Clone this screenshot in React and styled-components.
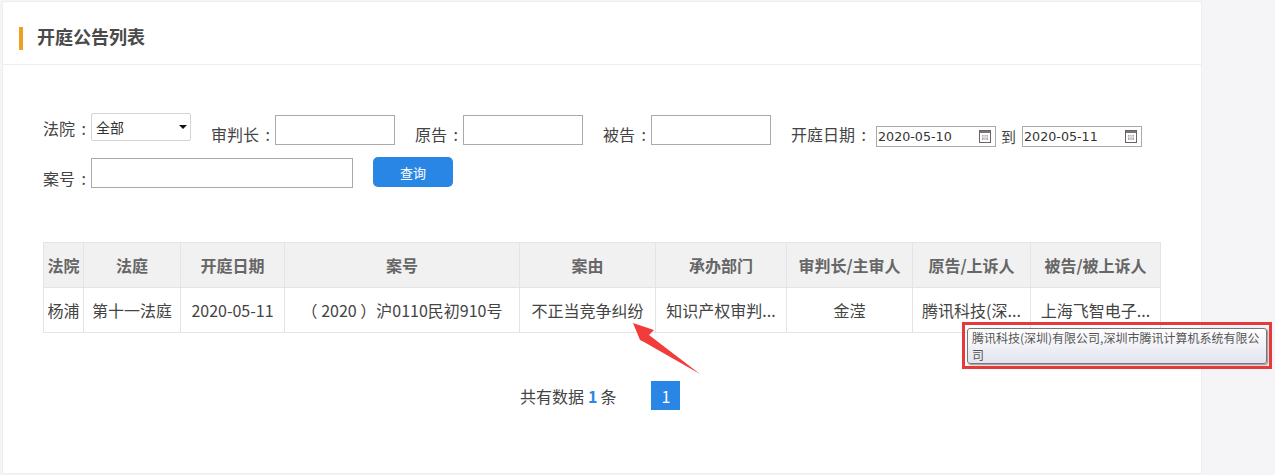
import styled, { createGlobalStyle } from "styled-components"

const FONT = `"Noto Sans CJK SC", "Liberation Sans", sans-serif`

const columns = [
  { name: '法院', width: 40, value: '杨浦' },
  { name: '法庭', width: 97, value: '第十一法庭' },
  { name: '开庭日期', width: 104, value: '2020-05-11' },
  { name: '案号', width: 235, value: '（ 2020 ）沪0110民初910号' },
  { name: '案由', width: 136, value: '不正当竞争纠纷' },
  { name: '承办部门', width: 131, value: '知识产权审判...' },
  { name: '审判长/主审人', width: 126, value: '金滢' },
  { name: '原告/上诉人', width: 118, value: '腾讯科技(深...' },
  { name: '被告/被上诉人', width: 130, value: '上海飞智电子...' },
]

const GlobalStyle = createGlobalStyle`
  body {
    margin: 0;
    background: #f5f5f8;
    font-family: ${FONT};
    color: #444;
  }
`

const Page = styled.div`
  position: relative;
  width: 1275px;
  height: 475px;
  padding: 1px 0 0 2px;
  box-sizing: border-box;
  overflow: hidden;
`

const Card = styled.div`
  width: 1200px;
  height: 473px;
  box-sizing: border-box;
  background: #fff;
  border: 1px solid #eeeeee;
`

const Header = styled.div`
  height: 63px;
  box-sizing: border-box;
  border-bottom: 1px solid #eeeeee;
  padding: 25px 0 0 16px;
  display: flex;
  gap: 14px;
`

const Mark = styled.div`
  width: 4px;
  height: 23px;
  background: #f0a020;
`

const Title = styled.h1`
  margin: -2px 0 0;
  font-size: 18px;
  line-height: 23px;
  font-weight: 700;
  color: #4a4a4a;
`

const Form = styled.div`
  padding: 48px 0 0 40px;
  display: flex;
  flex-direction: column;
  gap: 11px;
`

const Row = styled.div`
  display: flex;
  align-items: flex-start;
  gap: 20px;
`

const Field = styled.div`
  display: flex;
  align-items: flex-start;
  margin-top: ${(p) => p.$top || 0}px;
`

const Label = styled.label`
  width: ${(p) => p.$width}px;
  flex: none;
  margin-top: ${(p) => p.$top || 0}px;
  font-size: 16px;
  line-height: 24px;
  word-spacing: 3px;
  white-space: nowrap;
  color: #444;
`

const TextInput = styled.div`
  width: ${(p) => p.$width}px;
  height: 30px;
  box-sizing: border-box;
  border: 1px solid #aaaaaa;
  background: #fff;
`

const SelectBox = styled.div`
  width: 100px;
  height: 28px;
  box-sizing: border-box;
  border: 1px solid #d4d4d4;
  border-radius: 2px;
  padding-left: 4px;
  display: flex;
  align-items: center;
  justify-content: space-between;
  font-size: 14px;
  color: #333;
`

const Caret = styled.span`
  width: 0;
  height: 0;
  margin-right: 3px;
  border-left: 4px solid transparent;
  border-right: 4px solid transparent;
  border-top: 4px solid #111;
`

const DateBox = styled.div`
  width: 120px;
  height: 21px;
  box-sizing: border-box;
  border: 1px solid #aaaaaa;
  padding: 0 4px 0 1px;
  display: flex;
  align-items: center;
  justify-content: space-between;
  font-family: "DejaVu Sans", sans-serif;
  font-size: 12.7px;
  color: #333;
`

const To = styled.span`
  margin: 0 6px 0 5px;
  font-size: 15px;
  line-height: 21px;
  color: #444;
`

const QueryButton = styled.button`
  width: 80px;
  height: 30px;
  margin-top: -1px;
  border: 0;
  border-radius: 5px;
  background: #2a86e4;
  color: #fff;
  font-family: ${FONT};
  font-size: 13px;
`

const Table = styled.table`
  margin: 52px 0 0 40px;
  width: 1117px;
  table-layout: fixed;
  border-collapse: collapse;
  font-size: 16px;
`

const Th = styled.th`
  width: ${(p) => p.$width}px;
  height: 45px;
  box-sizing: border-box;
  padding: 0;
  background: #f1f1f1;
  border: 1px solid #e4e4e4;
  color: #666;
  font-weight: 700;
`

const Td = styled.td`
  height: 45px;
  box-sizing: border-box;
  padding: 0;
  border: 1px solid #e4e4e4;
  text-align: center;
  white-space: nowrap;
  color: #444;
`

const Pager = styled.div`
  margin: 48px 0 0 517px;
  display: flex;
  align-items: center;
  font-size: 16px;
`

const Count = styled.b`
  margin: 0 3px 0 4px;
  color: #2a86e4;
`

const PageNumber = styled.span`
  width: 29px;
  height: 29px;
  margin-left: 35px;
  display: flex;
  align-items: center;
  justify-content: center;
  background: #2a86e4;
  color: #fff;
`

const Callout = styled.div`
  position: absolute;
  left: 962px;
  top: 322px;
  width: 310px;
  height: 47px;
  box-sizing: border-box;
  border: 3px solid #e8383a;
  padding: 3px 2px;
`

const Tooltip = styled.div`
  height: 36px;
  box-sizing: border-box;
  padding: 0 4px;
  border: 1px solid #777;
  border-radius: 3px;
  background: linear-gradient(#ffffff, #e3e4ee);
  box-shadow: 1px 1px 2px #888;
  font-size: 12px;
  line-height: 17px;
  color: #555;
`

const ArrowSvg = styled.svg`
  position: absolute;
  left: 625px;
  top: 318px;
`

function CalendarIcon() {
  return (
    <svg width="12" height="13" viewBox="0 0 12 13">
      <rect x="0.5" y="0.5" width="11" height="12" fill="#fff" stroke="#666" />
      <rect x="1" y="1" width="10" height="2" fill="#777" />
      <rect x="3" y="5" width="6" height="5" fill="#b9a2a8" />
      <path d="M3 7h6M5 5v5M7 5v5" stroke="#eee" />
    </svg>
  )
}

function App() {
  return (
    <Page>
      <GlobalStyle />
      <Card>
        <Header>
          <Mark />
          <Title>开庭公告列表</Title>
        </Header>
        <Form>
          <Row>
            <Field>
              <Label $width={48} $top={3}>法院 :</Label>
              <SelectBox>全部<Caret /></SelectBox>
            </Field>
            <Field $top={2}>
              <Label $width={64} $top={7}>审判长 :</Label>
              <TextInput $width={120} />
            </Field>
            <Field $top={2}>
              <Label $width={48} $top={7}>原告 :</Label>
              <TextInput $width={120} />
            </Field>
            <Field $top={2}>
              <Label $width={48} $top={7}>被告 :</Label>
              <TextInput $width={120} />
            </Field>
            <Field $top={13}>
              <Label $width={85} $top={-4}>开庭日期 :</Label>
              <DateBox>2020-05-10<CalendarIcon /></DateBox>
              <To>到</To>
              <DateBox>2020-05-11<CalendarIcon /></DateBox>
            </Field>
          </Row>
          <Row>
            <Field>
              <Label $width={48} $top={8}>案号 :</Label>
              <TextInput $width={262} />
            </Field>
            <QueryButton>查询</QueryButton>
          </Row>
        </Form>
        <Table>
          <thead>
            <tr>
              {columns.map((col) => (
                <Th key={col.name} $width={col.width}>{col.name}</Th>
              ))}
            </tr>
          </thead>
          <tbody>
            <tr>
              {columns.map((col) => (
                <Td key={col.name}>{col.value}</Td>
              ))}
            </tr>
          </tbody>
        </Table>
        <Pager>
          共有数据<Count>1</Count>条
          <PageNumber>1</PageNumber>
        </Pager>
      </Card>
      <ArrowSvg width="80" height="60" viewBox="0 0 80 60">
        <polygon points="8,5 29,12 24,17 75,56 19,24 15,22" fill="#f23c3c" />
      </ArrowSvg>
      <Callout>
        <Tooltip>腾讯科技(深圳)有限公司,深圳市腾讯计算机系统有限公司</Tooltip>
      </Callout>
    </Page>
  )
}

export default App
